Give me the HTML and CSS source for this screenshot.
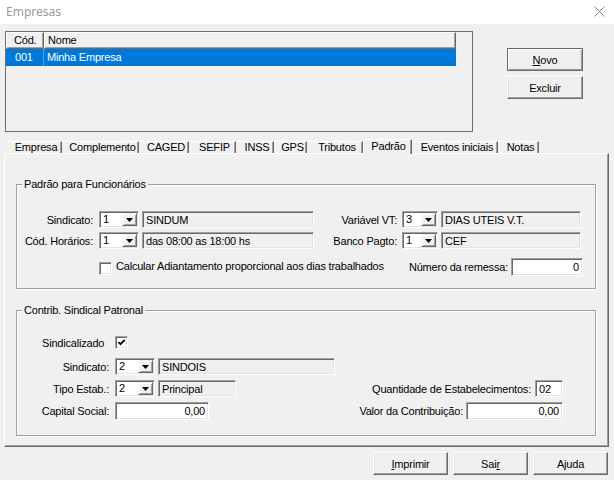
FILE: index.html
```html
<!DOCTYPE html>
<html lang="pt">
<head>
<meta charset="utf-8">
<title>Empresas</title>
<link rel="stylesheet" href="styles.css">
</head>
<body>
<div class="win">
  <div class="titlebar">
    <span class="title">Empresas</span>
    <svg class="close" width="11" height="11" viewBox="0 0 11 11"><path d="M0.5 0.5L10.5 10.5M10.5 0.5L0.5 10.5" stroke="#8a8a8a" stroke-width="1" fill="none"/></svg>
  </div>

  <div class="top">
    <div class="listview">
      <div class="lv-head">
        <div class="lv-h c1">Cód.</div>
        <div class="lv-h c2">Nome</div>
      </div>
      <div class="lv-row">
        <div class="lv-c c1">001</div>
        <div class="lv-c c2">Minha Empresa</div>
      </div>
    </div>
    <div class="sidebtns">
      <button class="btn default"><u>N</u>ovo</button>
      <button class="btn">Excluir</button>
    </div>
  </div>

  <div class="tabs">
    <div class="tab">Empresa</div>
    <div class="tab">Complemento</div>
    <div class="tab">CAGED</div>
    <div class="tab">SEFIP</div>
    <div class="tab">INSS</div>
    <div class="tab">GPS</div>
    <div class="tab">Tributos</div>
    <div class="tab sel">Padrão</div>
    <div class="tab">Eventos iniciais</div>
    <div class="tab">Notas</div>
  </div>

  <div class="panel">
    <fieldset class="grp g1">
      <legend>Padrão para Funcionários</legend>
      <div class="row r1">
        <span class="lbl l1">Sindicato:</span>
        <div class="combo cw40"><span class="cv">1</span><span class="cbtn"><svg width="7" height="4" viewBox="0 0 7 4"><polygon points="0,0 7,0 3.5,4" fill="#000"/></svg></span></div>
        <div class="fld ro fw172">SINDUM</div>
        <span class="lbl l2">Variável VT:</span>
        <div class="combo cw36"><span class="cv">3</span><span class="cbtn"><svg width="7" height="4" viewBox="0 0 7 4"><polygon points="0,0 7,0 3.5,4" fill="#000"/></svg></span></div>
        <div class="fld ro fw140">DIAS UTEIS V.T.</div>
      </div>
      <div class="row r2">
        <span class="lbl l1">Cód. Horários:</span>
        <div class="combo cw40"><span class="cv">1</span><span class="cbtn"><svg width="7" height="4" viewBox="0 0 7 4"><polygon points="0,0 7,0 3.5,4" fill="#000"/></svg></span></div>
        <div class="fld ro fw172">das 08:00 as 18:00 hs</div>
        <span class="lbl l2">Banco Pagto:</span>
        <div class="combo cw36"><span class="cv">1</span><span class="cbtn"><svg width="7" height="4" viewBox="0 0 7 4"><polygon points="0,0 7,0 3.5,4" fill="#000"/></svg></span></div>
        <div class="fld ro fw140">CEF</div>
      </div>
      <div class="row r3">
        <span class="spacer77"></span>
        <span class="chk chk-low"></span>
        <span class="chklbl">Calcular Adiantamento proporcional aos dias trabalhados</span>
        <span class="lbl push mr3">Número da remessa:</span>
        <div class="fld fw72 num">0</div>
      </div>
    </fieldset>

    <fieldset class="grp g2">
      <legend>Contrib. Sindical Patronal</legend>
      <div class="row s0">
        <span class="lbl sindlbl">Sindicalizado</span>
        <span class="chk"><svg width="11" height="11" viewBox="0 0 11 11"><polyline points="2.5,5 4.5,7.2 8.8,2.8" fill="none" stroke="#000" stroke-width="1.8"/></svg></span>
      </div>
      <div class="row s1">
        <span class="lbl l3">Sindicato:</span>
        <div class="combo cw40"><span class="cv">2</span><span class="cbtn"><svg width="7" height="4" viewBox="0 0 7 4"><polygon points="0,0 7,0 3.5,4" fill="#000"/></svg></span></div>
        <div class="fld ro fw177">SINDOIS</div>
      </div>
      <div class="row s2">
        <span class="lbl l3">Tipo Estab.:</span>
        <div class="combo cw40"><span class="cv">2</span><span class="cbtn"><svg width="7" height="4" viewBox="0 0 7 4"><polygon points="0,0 7,0 3.5,4" fill="#000"/></svg></span></div>
        <div class="fld ro fw78">Principal</div>
        <span class="lbl push mr4">Quantidade de Estabelecimentos:</span>
        <div class="fld fw28">02</div>
      </div>
      <div class="row s3">
        <span class="lbl l3">Capital Social:</span>
        <div class="fld fw94 num">0,00</div>
        <span class="lbl push mr3">Valor da Contribuição:</span>
        <div class="fld fw97 num">0,00</div>
      </div>
    </fieldset>
  </div>

  <div class="bottom">
    <button class="btn bb"><u>I</u>mprimir</button>
    <button class="btn bb">Sai<u>r</u></button>
    <button class="btn bb">Ajuda</button>
  </div>
</div>
</body>
</html>
```

FILE: styles.css
```css
html, body {
  margin: 0;
  padding: 0;
}
body {
  background: #f0f0f0;
  font: 11px "Liberation Sans", Arial, sans-serif;
  letter-spacing: -0.2px;
  color: #000;
}
.win {
  width: 614px;
  height: 480px;
  overflow: hidden;
  display: flex;
  flex-direction: column;
}

/* title bar */
.titlebar {
  flex: none;
  height: 24px;
  background: #fff;
  display: flex;
  align-items: center;
  justify-content: space-between;
  padding: 0 9px 0 6px;
  box-sizing: border-box;
}
.title {
  font: 12px "Noto Sans", "Open Sans", sans-serif;
  letter-spacing: 0;
  color: #999;
  margin-top: -1px;
}
.close {
  display: block;
  margin-top: -1px;
}

/* top: list + buttons */
.top {
  flex: none;
  display: flex;
  align-items: flex-start;
  padding: 7px 0 0 5px;
}
.listview {
  width: 468px;
  height: 101px;
  box-sizing: border-box;
  border: 1px solid #6e6e6e;
}
.lv-head, .lv-row {
  display: flex;
  width: 450px;
  height: 17px;
}
.lv-h {
  box-sizing: border-box;
  height: 17px;
  border-top: 1px solid #fff;
  border-left: 1px solid #fff;
  border-right: 1px solid #696969;
  border-bottom: 1px solid #696969;
  box-shadow: inset -1px -1px 0 #a0a0a0;
  line-height: 14px;
  white-space: nowrap;
}
.lv-h.c1 { width: 38px; padding-left: 7px; }
.lv-h.c2 { width: 412px; padding-left: 3px; }
.lv-row {
  background: #0078d7;
  color: #fff;
}
.lv-c {
  box-sizing: border-box;
  line-height: 17px;
  white-space: nowrap;
}
.lv-c.c1 { width: 38px; padding-left: 9px; border-right: 1px solid #5a9fd8; }
.lv-c.c2 { width: 412px; padding-left: 3px; }

.sidebtns {
  display: flex;
  flex-direction: column;
  gap: 5px;
  margin: 17px 0 0 34px;
}

/* buttons */
.btn {
  box-sizing: border-box;
  width: 76px;
  height: 23px;
  margin: 0;
  padding: 0;
  font: 11px "Liberation Sans", Arial, sans-serif;
  letter-spacing: -0.2px;
  color: #000;
  background: #f0f0f0;
  border: 1px solid;
  border-color: #fff #696969 #696969 #fff;
  box-shadow: inset -1px -1px 0 #a0a0a0, inset 1px 1px 0 #e3e3e3;
  text-align: center;
}
.btn.default {
  border-color: #696969;
  box-shadow: inset 1px 1px 0 #fff, inset -1px -1px 0 #a0a0a0, inset -2px -2px 0 #e3e3e3;
}
.btn.bb { width: 75px; }

/* tabs */
.tabs {
  flex: none;
  display: flex;
  align-items: flex-start;
  height: 14px;
  margin-top: 7px;
  padding-left: 6px;
}
.tab {
  box-sizing: border-box;
  height: 12px;
  margin-top: 2px;
  border-top: 1px solid #fff;
  border-right: 1px solid #696969;
  box-shadow: inset -1px 0 0 #a0a0a0;
  display: flex;
  align-items: center;
  justify-content: center;
  padding-left: 5px;
  line-height: 11px;
  white-space: nowrap;
}
.tab:nth-child(1) { width: 56px; }
.tab:nth-child(2) { width: 77px; }
.tab:nth-child(3) { width: 50px; }
.tab:nth-child(4) { width: 47px; }
.tab:nth-child(5) { width: 38px; }
.tab:nth-child(6) { width: 33px; }
.tab:nth-child(7) { width: 56px; }
.tab:nth-child(8) { width: 49px; }
.tab:nth-child(9) { width: 86px; }
.tab:nth-child(10) { width: 41px; }
.tab.sel {
  height: 15px;
  margin-top: 0;
  padding-left: 2px;
  padding-bottom: 2px;
  border-left: 1px solid #fff;
  background: #f0f0f0;
  position: relative;
  z-index: 1;
}

/* panel */
.panel {
  flex: none;
  margin-left: 4px;
  width: 605px;
  box-sizing: border-box;
  border: 1px solid;
  border-color: #fff #696969 #696969 #fff;
  box-shadow: inset -1px -1px 0 #a0a0a0;
  padding: 24px 12px 10px 11px;
}
.grp {
  margin: 0;
  min-width: 0;
  border: 1px solid #a0a0a0;
  box-shadow: inset 1px 1px 0 #fff, 1px 1px 0 #fff;
}
.grp legend {
  padding: 0 2px;
  line-height: 13px;
  background: #f0f0f0;
}
.g1 { padding: 20px 12px 12px 5px; }
.g2 { padding: 19px 32px 15px 5px; margin-top: 15px; }

.row {
  display: flex;
  align-items: center;
  height: 17px;
  white-space: nowrap;
}
.r2 { margin-top: 4px; }
.r3 { margin-top: 9px; height: 18px; }
.s0 { height: 13px; }
.s1 { margin-top: 9px; }
.s2 { margin-top: 5px; }
.s3 { margin-top: 5px; height: 18px; }

.lbl { flex: none; }
.l1 { width: 71px; text-align: right; margin-right: 6px; }
.l2 { width: 83px; text-align: right; margin-right: 5px; }
.l3 { width: 87px; text-align: right; margin-right: 6px; }
.sindlbl { width: 73px; margin-left: 20px; }
.push { margin-left: auto; }
.mr3 { margin-right: 3px; }
.mr4 { margin-right: 4px; }
.spacer77 { flex: none; width: 77px; }

/* sunken controls */
.combo, .fld, .chk {
  flex: none;
  box-sizing: border-box;
  border: 1px solid;
  border-color: #a0a0a0 #fff #fff #a0a0a0;
  box-shadow: inset 1px 1px 0 #696969, inset -1px -1px 0 #e3e3e3;
  background: #fff;
}
.combo {
  display: flex;
  height: 17px;
  padding: 1px;
  margin-right: 3px;
}
.cw40 { width: 40px; }
.cw36 { width: 36px; }
.cv {
  flex: 1;
  padding-left: 2px;
  line-height: 13px;
}
.cbtn {
  box-sizing: border-box;
  width: 15px;
  height: 13px;
  background: #f0f0f0;
  border: 1px solid;
  border-color: #f0f0f0 #696969 #696969 #f0f0f0;
  box-shadow: inset 1px 1px 0 #fff, inset -1px -1px 0 #a0a0a0;
  display: flex;
  align-items: center;
  justify-content: center;
}
.cbtn svg { display: block; margin-top: 1px; }

.fld {
  height: 100%;
  padding: 0 3px;
  display: flex;
  align-items: center;
  overflow: hidden;
}
.fld.ro { background: #f0f0f0; }
.fld.num { justify-content: flex-end; }
.fw172 { width: 172px; }
.fw140 { width: 140px; }
.fw72 { width: 72px; }
.fw177 { width: 177px; }
.fw78 { width: 78px; }
.fw28 { width: 28px; }
.fw94 { width: 94px; }
.fw97 { width: 97px; }
.s2 .fld, .s1 .fld, .r1 .fld, .r2 .fld { height: 17px; }

.chk {
  width: 13px;
  height: 13px;
  display: flex;
  align-items: center;
  justify-content: center;
  padding: 0;
}
.chk svg { display: block; }
.chk-low { align-self: flex-start; margin-top: 4px; }
.chklbl { margin-left: 4px; margin-top: -3px; }

/* bottom buttons */
.bottom {
  flex: none;
  display: flex;
  justify-content: flex-end;
  gap: 5px;
  padding: 5px 6px 0 0;
}
```
